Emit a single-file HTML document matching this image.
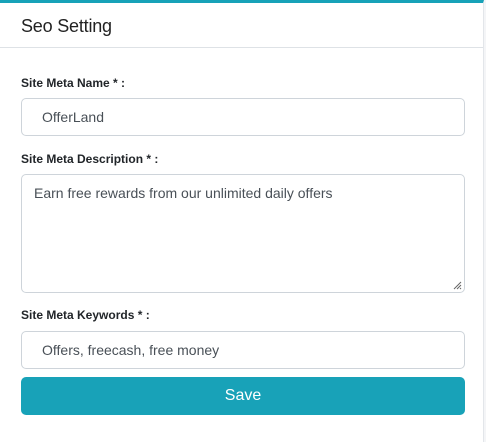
<!DOCTYPE html>
<html><head><style>
body{margin:0;background:#f4f5f7;font-family:"Liberation Sans",sans-serif;width:486px;height:442px;overflow:hidden}
.card{position:absolute;left:0;top:0;width:484px;height:442px;background:#fff;border-right:1px solid #e3e6ea;border-top:3px solid #17a2b8;box-sizing:border-box}
.hd{position:absolute;left:0;top:0;width:100%;height:44px;border-bottom:1px solid #dee2e6}
.hd span{position:absolute;left:21px;top:13px;font-size:18px;color:#222;letter-spacing:-0.2px}
.lb{position:absolute;left:21px;font-size:12px;font-weight:bold;color:#212529}
.in{position:absolute;left:21px;width:444px;border:1px solid #ced4da;border-radius:5px;box-sizing:border-box;font-size:14px;color:#495057}
.btn{position:absolute;left:21px;top:374px;width:444px;height:38px;background:#18a2b8;border-radius:5px;color:#fff;font-size:16px;text-align:center;line-height:38px}
</style></head><body>
<div class="card">
<div class="hd"><span>Seo Setting</span></div>
<div class="lb" style="top:73px">Site Meta Name * :</div>
<div class="in" style="top:95px;height:38px;line-height:36px;padding-left:20px">OfferLand</div>
<div class="lb" style="top:149px">Site Meta Description * :</div>
<div class="in" style="top:171px;height:119px;padding:10px 12px">Earn free rewards from our unlimited daily offers
<svg style="position:absolute;right:2px;bottom:2px" width="9" height="9"><path d="M1 8L8 1M4 8L8 4M7 8L8 7" stroke="#666" stroke-width="1"/></svg></div>
<div class="lb" style="top:305px">Site Meta Keywords * :</div>
<div class="in" style="top:328px;height:38px;line-height:36px;padding-left:20px">Offers, freecash, free money</div>
<div class="btn">Save</div>
</div>
</body></html>
